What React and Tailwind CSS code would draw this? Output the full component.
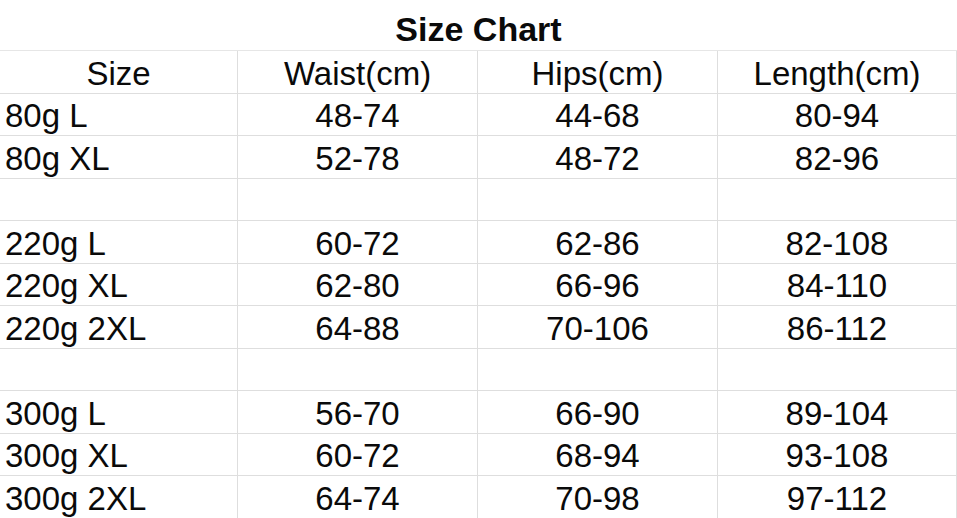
const rows = [
  ["80g L", "48-74", "44-68", "80-94"],
  ["80g XL", "52-78", "48-72", "82-96"],
  null,
  ["220g L", "60-72", "62-86", "82-108"],
  ["220g XL", "62-80", "66-96", "84-110"],
  ["220g 2XL", "64-88", "70-106", "86-112"],
  null,
  ["300g L", "56-70", "66-90", "89-104"],
  ["300g XL", "60-72", "68-94", "93-108"],
  ["300g 2XL", "64-74", "70-98", "97-112"],
]

const cols = "grid grid-cols-[238px_240px_240px_239px]"
const cell = "flex h-[42.5px] items-center border-r border-b border-[#dedede] pt-[3px]"

export default function App() {
  return (
    <div
      className="h-[518px] w-[957px] overflow-hidden bg-white text-[#0a0a0a]"
      style={{ fontFamily: '"Liberation Sans", Arial, sans-serif' }}
    >
      <div className="flex h-[51px] items-center justify-center border-b border-[#e6e6e6] pt-[7px] text-[34px] font-bold leading-none">
        Size Chart
      </div>

      <div className={cols}>
        {["Size", "Waist(cm)", "Hips(cm)", "Length(cm)"].map((label) => (
          <div key={label} className={`${cell} justify-center text-[33px] leading-none`}>
            {label}
          </div>
        ))}
      </div>

      {rows.map((row, i) =>
        row ? (
          <div key={i} className={cols}>
            {row.map((value, j) => (
              <div
                key={j}
                className={`${cell} text-[33px] leading-none ${j === 0 ? "justify-start pl-[5px]" : "justify-center"}`}
              >
                {value}
              </div>
            ))}
          </div>
        ) : (
          <div key={i} className={cols}>
            {[0, 1, 2, 3].map((j) => (
              <div key={j} className={cell} />
            ))}
          </div>
        )
      )}
    </div>
  )
}
